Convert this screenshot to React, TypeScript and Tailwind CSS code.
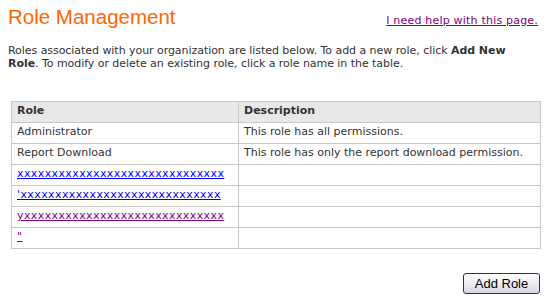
export default function App() {
  const linkRows = [
    { name: "xxxxxxxxxxxxxxxxxxxxxxxxxxxxxx", visited: false },
    { name: "'xxxxxxxxxxxxxxxxxxxxxxxxxxxxx", visited: false },
    { name: "yxxxxxxxxxxxxxxxxxxxxxxxxxxxxx", visited: true },
    { name: '"', visited: true },
  ];

  const cell = "border border-[#c8c8c8] px-[5px]";

  return (
    <div className="min-h-[305px] bg-white px-[8px] font-['DejaVu_Sans',Verdana,sans-serif] text-[11px] text-[#333]">
      {/* Header */}
      <div className="flex items-start justify-between pt-[5px] pr-[6px]">
        <h1 className="font-['Liberation_Sans',Arial,sans-serif] text-[20.5px] leading-[23px] text-[#ff6600]">
          Role Management
        </h1>
        <a href="#" className="mt-[8px] tracking-[0.2px] text-[#800080] underline">
          I need help with this page.
        </a>
      </div>

      {/* Intro */}
      <p className="mt-[14px] pr-[20px] leading-[13px] tracking-[-0.05px]">
        Roles associated with your organization are listed below. To add a new role, click{" "}
        <b>Add New Role</b>. To modify or delete an existing role, click a role name in the table.
      </p>

      {/* Roles table */}
      <table className="mt-[31px] ml-[3px] w-[530px] border-collapse">
        <thead>
          <tr className="h-[21px] bg-[#e8e8e8] text-left">
            <th className={`w-[227px] font-bold ${cell}`}>Role</th>
            <th className={`font-bold ${cell}`}>Description</th>
          </tr>
        </thead>
        <tbody>
          <tr className="h-[21px]">
            <td className={cell}>Administrator</td>
            <td className={cell}>This role has all permissions.</td>
          </tr>
          <tr className="h-[21px]">
            <td className={cell}>Report Download</td>
            <td className={cell}>This role has only the report download permission.</td>
          </tr>
          {linkRows.map((r, i) => (
            <tr key={i} className="h-[21px]">
              <td className={cell}>
                <a
                  href="#"
                  className={
                    r.visited
                      ? "tracking-[0.4px] text-[#800080] underline"
                      : "tracking-[0.4px] text-[#0000ff] underline"
                  }
                >
                  {r.name}
                </a>
              </td>
              <td className={cell}></td>
            </tr>
          ))}
        </tbody>
      </table>

      {/* Actions */}
      <div className="mt-[24px] flex justify-end pr-[4px]">
        <button className="h-[21px] w-[77px] rounded-[3px] border border-[#1c3460] bg-gradient-to-b from-white to-[#d8d8e4] font-['Liberation_Sans',Arial,sans-serif] text-[13px] text-black">
          Add Role
        </button>
      </div>
    </div>
  );
}
